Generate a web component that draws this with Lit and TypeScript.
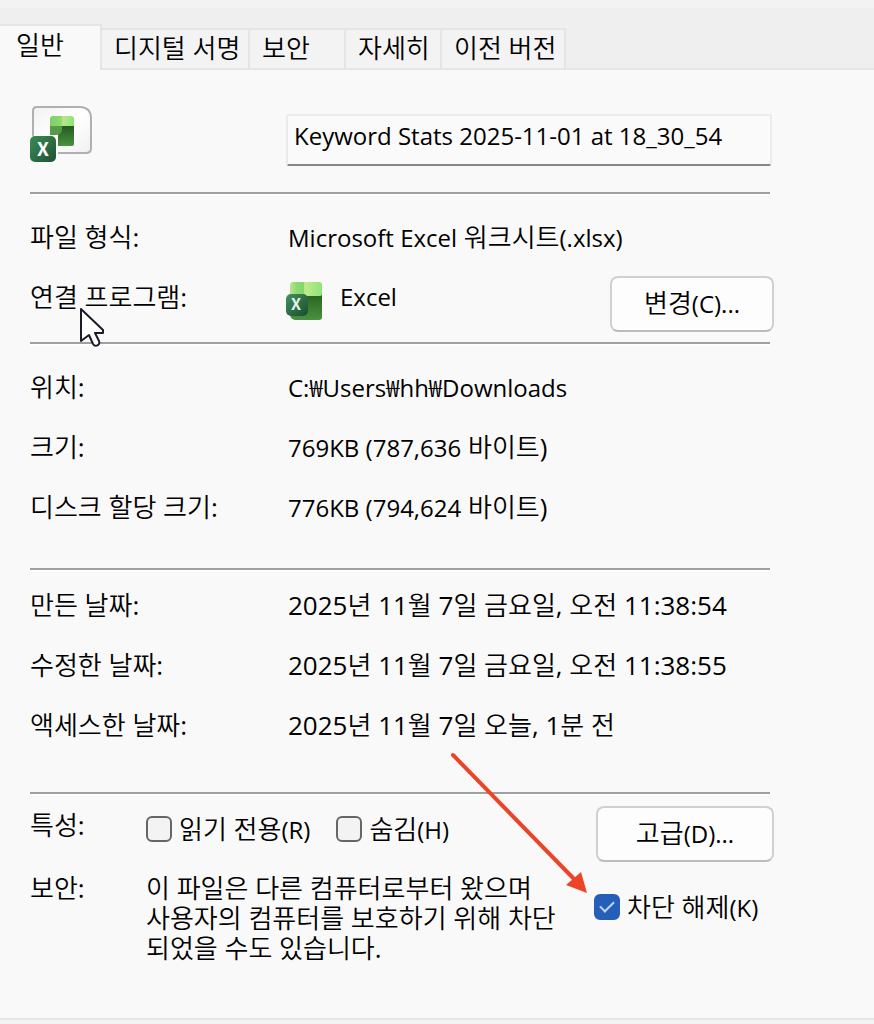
import { LitElement, html, svg, css } from "lit";
import { customElement, state } from "lit/decorators.js";

const TABS = ["일반", "디지털 서명", "보안", "자세히", "이전 버전"];

@customElement("file-icon")
class FileIcon extends LitElement {
  static styles = css`
    :host { display: block; }
    .art { display: block; }
    .mark { font: 700 19px "Noto Sans CJK KR", "Noto Sans", sans-serif; }
  `;
  render() {
    return html`<svg class="art" width="62" height="57" viewBox="0 0 62 57" aria-hidden="true">
      <defs>
        <linearGradient id="page" x1="0" y1="0" x2="1" y2="1"><stop offset="0" stop-color="#f2f2f2"/><stop offset=".5" stop-color="#fff"/><stop offset="1" stop-color="#f0f0f0"/></linearGradient>
        <linearGradient id="light" x1="0" x2="1"><stop offset="0" stop-color="#7fce68"/><stop offset=".45" stop-color="#8ada70"/><stop offset=".55" stop-color="#bbe58a"/><stop offset="1" stop-color="#8ae476"/></linearGradient>
        <linearGradient id="dark" x1="0" y1="0" x2="0" y2="1"><stop offset="0" stop-color="#245a20"/><stop offset="1" stop-color="#4a9140"/></linearGradient>
        <linearGradient id="badge" x1="0" y1="0" x2="1" y2="1"><stop offset="0" stop-color="#3d8b58"/><stop offset="1" stop-color="#1d5332"/></linearGradient>
      </defs>
      <path d="M7 1H51Q61 2 61 12V42Q61 47 56 47H7Q3 47 3 43V5Q3 1 7 1Z" fill="url(#page)" stroke="#b0b0b0" stroke-width="2"/>
      <path d="M28 20H44V38Q44 40 42 40H28Z" fill="url(#dark)"/>
      <path d="M23 10H41Q44 10 44 13V20H20V13Q20 10 23 10Z" fill="url(#light)"/>
      <path d="M20 20H32V24Q31 29 26 29H20Z" fill="#579b49"/>
      <rect x="0" y="29" width="28" height="27" rx="6" fill="#fafafa"/>
      <rect x="0" y="30" width="26" height="26" rx="5" fill="url(#badge)"/>
      <text class="mark" x="13" y="50" text-anchor="middle" fill="#fff">X</text>
    </svg>`;
  }
}

@customElement("excel-icon")
class ExcelIcon extends LitElement {
  static styles = css`
    :host { display: block; }
    .art { display: block; }
    .mark { font: 700 16px "Noto Sans CJK KR", "Noto Sans", sans-serif; }
  `;
  render() {
    return html`<svg class="art" width="36" height="38" viewBox="0 0 36 38" aria-hidden="true">
      <defs>
        <linearGradient id="light" x1="0" x2="1"><stop offset="0" stop-color="#b9e68d"/><stop offset=".2" stop-color="#8dda72"/><stop offset=".42" stop-color="#86d46c"/><stop offset=".46" stop-color="#c3e88f"/><stop offset="1" stop-color="#8be678"/></linearGradient>
        <linearGradient id="dark" x1="0" y1="0" x2="0" y2="1"><stop offset="0" stop-color="#28641f"/><stop offset="1" stop-color="#4a9140"/></linearGradient>
        <linearGradient id="badge" x1="0" y1="0" x2="1" y2="1"><stop offset="0" stop-color="#459162"/><stop offset="1" stop-color="#174d2c"/></linearGradient>
      </defs>
      <path d="M4 12H36V35Q36 38 33 38H9Q4 37 4 32Z" fill="url(#dark)"/>
      <path d="M7 0H33Q36 0 36 3V12Q36 14 33 14H4V4Q4 0 7 0Z" fill="url(#light)"/>
      <rect x="0" y="12" width="22" height="22" rx="5" fill="url(#badge)"/>
      <text class="mark" x="10" y="28" text-anchor="middle" fill="#e4f0e8">X</text>
    </svg>`;
  }
}

@customElement("app-root")
class AppRoot extends LitElement {
  @state() private active = 0;

  static styles = css`
    :host {
      display: flex;
      flex-direction: column;
      position: relative;
      min-height: 100vh;
      background: #f9f9f9;
      color: #000;
      font: 400 26px/30px "Open Sans", "Noto Sans CJK KR DemiLight", "Noto Sans CJK KR", sans-serif;
      white-space: nowrap;
    }
    * { box-sizing: border-box; }
    .strip {
      display: grid;
      grid-template-columns: 102px 148px 96px 96px 124px 1fr;
      align-items: end;
      height: 70px;
      border-top: 8px solid #f3f3f3;
      background: #efefef;
    }
    .tab {
      height: 42px;
      padding: 0 0 2px 12px;
      border: solid #e5e5e5;
      border-width: 2px 2px 2px 0;
      background: #f3f3f3;
      color: inherit;
      font: inherit;
      text-align: left;
    }
    .tab.active {
      height: 46px;
      padding: 0 0 6px 16px;
      border-bottom: 0;
      background: #f9f9f9;
    }
    .rest { height: 2px; background: #e5e5e5; }
    .panel { flex: 1; padding: 0 100px 0 30px; }
    .group {
      margin-right: 4px;
      border-bottom: 2px solid #a0a0a0;
      box-shadow: 0 2px #fff;
    }
    .row {
      display: grid;
      grid-template-columns: 258px 1fr auto;
      align-items: center;
      height: 60px;
    }
    .head { padding: 36px 0 26px; }
    .head .row { grid-template-columns: 256px 1fr; align-items: start; margin-right: -2px; }
    .name {
      width: 100%;
      height: 52px;
      margin-top: 8px;
      padding: 0 6px 10px;
      border: 2px solid #ebebeb;
      border-bottom-color: #868686;
      border-radius: 3px;
      background: #fafafa;
      color: inherit;
      font: inherit;
    }
    .kind { padding: 13px 0 15px; }
    .place { padding: 13px 0 31px; }
    .dates { padding: 5px 0 37px; }
    .latin { font-size: 24px; }
    .app { display: flex; align-items: center; gap: 18px; margin-left: -2px; }
    .icon { margin-top: 8px; }
    .button {
      height: 56px;
      padding: 0 0 2px;
      border: 2px solid #d0d0d0;
      border-bottom-color: #bcbcbc;
      border-radius: 8px;
      background: #fdfdfd;
      color: inherit;
      font: inherit;
    }
    .change { width: 164px; margin: 9px -4px -5px 0; }
    .extras {
      display: grid;
      grid-template-columns: 116px 1fr 180px;
      padding-top: 12px;
    }
    .term { padding-top: 4px; }
    .checks { display: flex; gap: 26px; padding-top: 8px; }
    .check { display: flex; align-items: center; gap: 7px; height: 30px; }
    .box {
      appearance: none;
      display: grid;
      place-items: center;
      flex: none;
      width: 26px;
      height: 26px;
      margin: 0;
      border: 2px solid #666;
      border-radius: 6px;
      background: #f3f3f3;
    }
    .box:checked { border-color: #265fb7; background: #265fb7; }
    .box:checked::before {
      content: "";
      width: 12px;
      height: 6px;
      margin-bottom: 4px;
      border: solid #bfd6f5;
      border-width: 0 0 2px 2px;
      rotate: -45deg;
    }
    .advanced { justify-self: end; width: 178px; }
    .security { padding-top: 11px; }
    .note { margin: 0; padding-top: 11px; white-space: pre-line; }
    .unblock { margin-top: 30px; }
    .foot { height: 6px; border-top: 2px solid #e5e5e5; background: #f3f3f3; }
    .overlay { position: absolute; pointer-events: none; }
    .cursor { left: 80px; top: 307px; }
    .arrow { left: 450px; top: 750px; }
  `;

  private row(label: string, value: unknown) {
    return html`<div class="row"><span>${label}</span><span>${value}</span></div>`;
  }

  render() {
    return html`
      <div class="strip" role="tablist">
        ${TABS.map((t, i) => html`<button class="tab ${i === this.active ? "active" : ""}" role="tab"
          aria-selected=${i === this.active} @click=${() => (this.active = i)}>${t}</button>`)}
        <div class="rest"></div>
      </div>
      <main class="panel">
        <section class="group head">
          <div class="row">
            <file-icon></file-icon>
            <input class="name latin" aria-label="파일 이름" .value=${"Keyword Stats 2025-11-01 at 18_30_54"}>
          </div>
        </section>
        <section class="group kind">
          ${this.row("파일 형식:", html`<span class="latin">Microsoft Excel</span> 워크시트<span class="latin">(.xlsx)</span>`)}
          <div class="row">
            <span>연결 프로그램:</span>
            <span class="app"><excel-icon class="icon"></excel-icon><span class="latin">Excel</span></span>
            <button class="button change">변경<span class="latin">(C)...</span></button>
          </div>
        </section>
        <section class="group place">
          ${this.row("위치:", html`<span class="latin">C:₩Users₩hh₩Downloads</span>`)}
          ${this.row("크기:", html`<span class="latin">769KB (787,636</span> 바이트)`)}
          ${this.row("디스크 할당 크기:", html`<span class="latin">776KB (794,624</span> 바이트)`)}
        </section>
        <section class="group dates">
          ${this.row("만든 날짜:", "2025년 11월 7일 금요일, 오전 11:38:54")}
          ${this.row("수정한 날짜:", "2025년 11월 7일 금요일, 오전 11:38:55")}
          ${this.row("액세스한 날짜:", "2025년 11월 7일 오늘, 1분 전")}
        </section>
        <section class="extras">
          <span class="term">특성:</span>
          <div class="checks">
            <label class="check"><input class="box" type="checkbox"><span>읽기 전용<span class="latin">(R)</span></span></label>
            <label class="check"><input class="box" type="checkbox"><span>숨김<span class="latin">(H)</span></span></label>
          </div>
          <button class="button advanced">고급<span class="latin">(D)...</span></button>
          <span class="security">보안:</span>
          <p class="note">이 파일은 다른 컴퓨터로부터 왔으며
사용자의 컴퓨터를 보호하기 위해 차단
되었을 수도 있습니다.</p>
          <label class="check unblock"><input class="box" type="checkbox" checked><span>차단 해제<span class="latin">(K)</span></span></label>
        </section>
      </main>
      <div class="foot"></div>
      <svg class="overlay cursor" width="26" height="40" viewBox="0 0 26 40" aria-hidden="true">
        ${svg`<path d="M1 2V34L9 28L13 37Q15 40 18 38Q20 37 19 34L15 26H23V23Z" fill="#fff" stroke="#1c1c28" stroke-width="2" stroke-linejoin="round"/>`}
      </svg>
      <svg class="overlay arrow" width="140" height="146" viewBox="0 0 140 146" aria-hidden="true">
        ${svg`<path d="M3 5L126 131" stroke="#ec4427" stroke-width="4" stroke-linecap="round"/><path d="M137 143L116 135L131 122Z" fill="#ec4427"/>`}
      </svg>
    `;
  }
}
